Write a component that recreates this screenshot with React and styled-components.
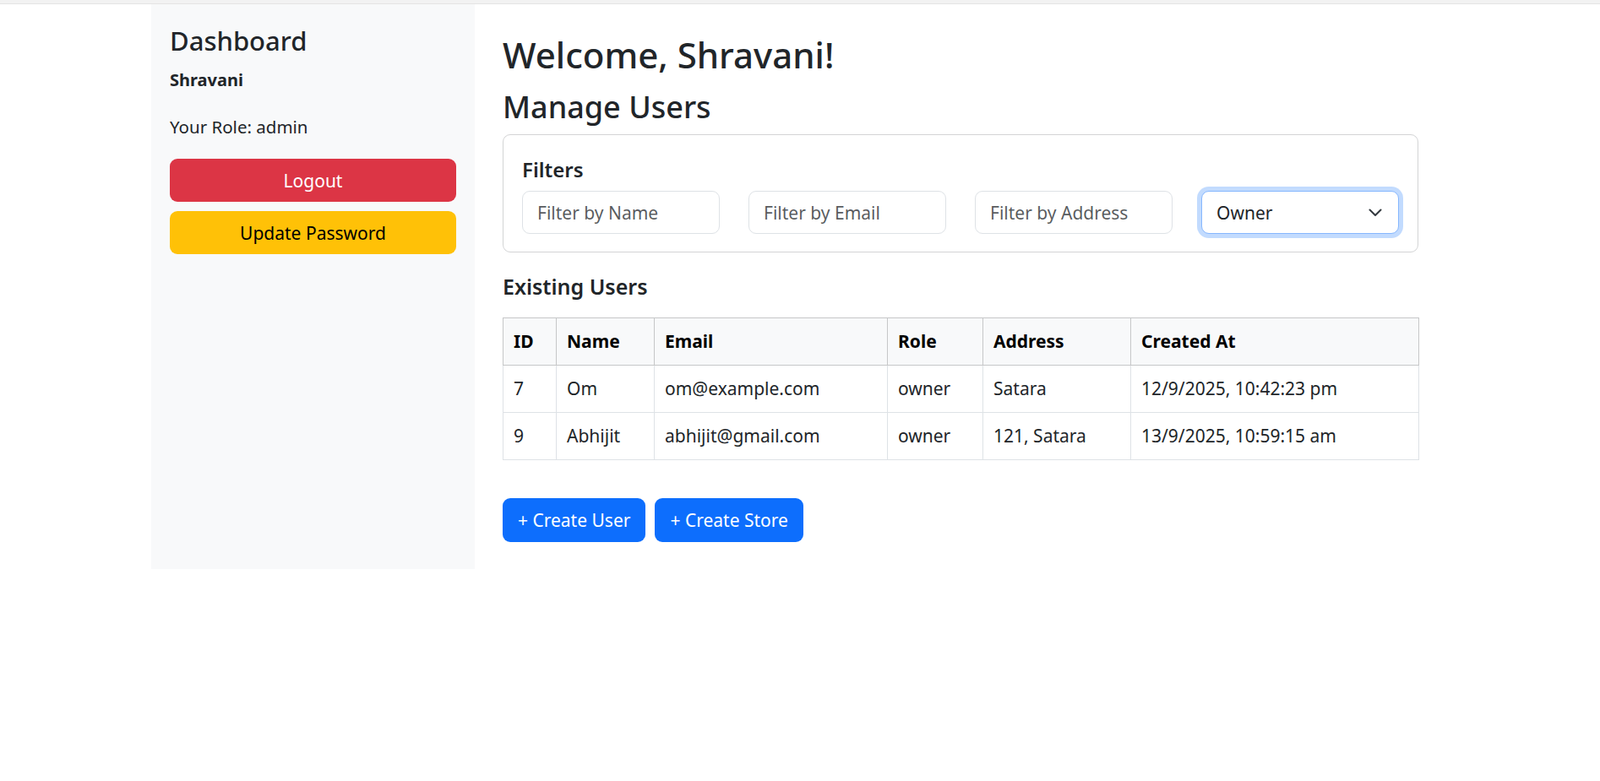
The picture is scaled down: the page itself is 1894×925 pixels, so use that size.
import { useState } from "react";
import styled, { createGlobalStyle, css } from "styled-components";

const GlobalStyle = createGlobalStyle`
  * { box-sizing: border-box; }
  body {
    margin: 0;
    background: #ffffff;
    color: #212529;
    font-family: "Noto Sans", "Open Sans", sans-serif;
  }
`;

const users = [
  { id: 7, name: "Om", email: "om@example.com", role: "owner", address: "Satara", createdAt: "12/9/2025, 10:42:23 pm" },
  { id: 9, name: "Abhijit", email: "abhijit@gmail.com", role: "owner", address: "121, Satara", createdAt: "13/9/2025, 10:59:15 am" },
];

const columns = [
  { key: "id", label: "ID", width: 63 },
  { key: "name", label: "Name", width: 116 },
  { key: "email", label: "Email", width: 276 },
  { key: "role", label: "Role", width: 113 },
  { key: "address", label: "Address", width: 175 },
  { key: "createdAt", label: "Created At", width: 341 },
];

export default function App() {
  const [filters, setFilters] = useState({ name: "", email: "", address: "", role: "owner" });

  const update = (field) => (e) => setFilters({ ...filters, [field]: e.target.value });

  return (
    <>
      <GlobalStyle />
      <TopStrip />
      <Layout>
        <Sidebar>
          <SideTitle>Dashboard</SideTitle>
          <UserName>Shravani</UserName>
          <RoleText>Your Role: admin</RoleText>
          <SideButton $variant="danger">Logout</SideButton>
          <SideButton $variant="warning">Update Password</SideButton>
        </Sidebar>

        <Main>
          <PageTitle>Welcome, Shravani!</PageTitle>
          <SectionTitle>Manage Users</SectionTitle>

          <FilterCard>
            <CardTitle>Filters</CardTitle>
            <FilterGrid>
              <FilterInput placeholder="Filter by Name" value={filters.name} onChange={update("name")} />
              <FilterInput placeholder="Filter by Email" value={filters.email} onChange={update("email")} />
              <FilterInput placeholder="Filter by Address" value={filters.address} onChange={update("address")} />
              <SelectWrap>
                <RoleSelect value={filters.role} onChange={update("role")}>
                  <option value="">All Roles</option>
                  <option value="admin">Admin</option>
                  <option value="user">User</option>
                  <option value="owner">Owner</option>
                </RoleSelect>
                <Chevron width="16" height="10" viewBox="0 0 16 10" fill="none">
                  <path d="M1.5 1.5 L8 8 L14.5 1.5" stroke="#343a40" strokeWidth="2" strokeLinecap="round" strokeLinejoin="round" />
                </Chevron>
              </SelectWrap>
            </FilterGrid>
          </FilterCard>

          <SubTitle>Existing Users</SubTitle>

          <UserTable>
            <colgroup>
              {columns.map((c) => (
                <Col key={c.key} $width={c.width} />
              ))}
            </colgroup>
            <thead>
              <tr>
                {columns.map((c) => (
                  <HeadCell key={c.key}>{c.label}</HeadCell>
                ))}
              </tr>
            </thead>
            <tbody>
              {users.map((u) => (
                <tr key={u.id}>
                  {columns.map((c) => (
                    <Cell key={c.key}>{u[c.key]}</Cell>
                  ))}
                </tr>
              ))}
            </tbody>
          </UserTable>

          <ActionRow>
            <PrimaryButton>+ Create User</PrimaryButton>
            <PrimaryButton>+ Create Store</PrimaryButton>
          </ActionRow>
        </Main>
      </Layout>
    </>
  );
}

const TopStrip = styled.div`
  height: 5px;
  background: #f2f2f2;
  border-bottom: 1px solid #e4e4e4;
`;

const Layout = styled.div`
  display: flex;
  align-items: stretch;
  padding-left: 179px;
`;

const Sidebar = styled.aside`
  width: 383px;
  flex-shrink: 0;
  background: #f8f9fa;
  padding: 24px 22px;
  display: flex;
  flex-direction: column;
`;

const SideTitle = styled.h4`
  margin: 0 0 16px;
  font-size: 31px;
  line-height: 38px;
  font-weight: 500;
`;

const UserName = styled.h6`
  margin: 0 0 31px;
  font-size: 20px;
  line-height: 24px;
  font-weight: 700;
`;

const RoleText = styled.p`
  margin: 0 0 25px;
  font-size: 20.5px;
  line-height: 25px;
`;

const variants = {
  danger: css`
    background: #dc3545;
    color: #ffffff;
  `,
  warning: css`
    background: #ffc107;
    color: #000000;
  `,
};

const SideButton = styled.button`
  height: 51px;
  margin-bottom: 11px;
  border: none;
  border-radius: 9px;
  font-family: inherit;
  font-size: 21px;
  cursor: pointer;
  ${(p) => variants[p.$variant]}
`;

const Main = styled.main`
  width: 1150px;
  padding: 34px 33px 32px;
`;

const PageTitle = styled.h1`
  margin: 0 0 15px;
  font-size: 42px;
  line-height: 52px;
  font-weight: 500;
`;

const SectionTitle = styled.h2`
  margin: 0 0 11px;
  font-size: 36px;
  line-height: 42px;
  font-weight: 500;
`;

const FilterCard = styled.section`
  border: 1px solid #d3d4d5;
  border-radius: 9px;
  padding: 26px 22px 21px;
`;

const CardTitle = styled.h5`
  margin: 0 0 11px;
  font-size: 24px;
  line-height: 29px;
  font-weight: 600;
`;

const FilterGrid = styled.div`
  display: grid;
  grid-template-columns: repeat(4, 1fr);
  column-gap: 34px;
`;

const fieldBase = css`
  width: 100%;
  height: 51px;
  padding: 0 17px;
  border: 1px solid #dee2e6;
  border-radius: 9px;
  font-family: inherit;
  font-size: 21px;
  color: #212529;
  background: #ffffff;
  outline: none;
`;

const FilterInput = styled.input`
  ${fieldBase}
  &::placeholder {
    color: rgba(33, 37, 41, 0.75);
  }
`;

const SelectWrap = styled.div`
  position: relative;
`;

const RoleSelect = styled.select`
  ${fieldBase}
  appearance: none;
  border-color: #86b7fe;
  box-shadow: 0 0 0 5px rgba(13, 110, 253, 0.25);
`;

const Chevron = styled.svg`
  position: absolute;
  right: 20px;
  top: 21px;
  pointer-events: none;
`;

const SubTitle = styled.h5`
  margin: 26px 0 22px;
  font-size: 25px;
  line-height: 29px;
  font-weight: 600;
`;

const UserTable = styled.table`
  width: 100%;
  table-layout: fixed;
  border-collapse: collapse;
  font-size: 21px;
`;

const Col = styled.col`
  width: ${(p) => p.$width}px;
`;

const HeadCell = styled.th`
  padding: 15px 12px;
  line-height: 25px;
  text-align: left;
  font-weight: 700;
  color: #000000;
  background: #f8f9fa;
  border: 1px solid #c6c7c8;
`;

const Cell = styled.td`
  padding: 15px 12px;
  line-height: 25px;
  color: #212529;
  border: 1px solid #dee2e6;
  white-space: nowrap;
`;

const ActionRow = styled.div`
  display: flex;
  gap: 11px;
  margin-top: 45px;
`;

const PrimaryButton = styled.button`
  height: 52px;
  padding: 0 18px;
  border: none;
  border-radius: 9px;
  background: #0d6efd;
  color: #ffffff;
  font-family: inherit;
  font-size: 21px;
  cursor: pointer;
`;
